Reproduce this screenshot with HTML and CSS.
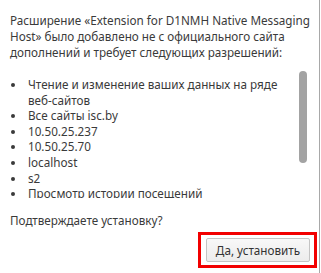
FILE: index.html
```html
<!DOCTYPE html>
<html lang="ru">
<head>
<meta charset="utf-8">
<link rel="stylesheet" href="styles.css">
</head>
<body>
<div class="dialog">
  <p class="intro">Расширение «Extension for D1NMH Native Messaging<br>Host» было добавлено не с официального сайта<br>дополнений и требует следующих разрешений:</p>
  <div class="scroll">
    <ul class="perms">
      <li>Чтение и изменение ваших данных на ряде<br>веб-сайтов</li>
      <li>Все сайты isc.by</li>
      <li>10.50.25.237</li>
      <li>10.50.25.70</li>
      <li>localhost</li>
      <li>s2</li>
      <li>Просмотр истории посещений</li>
    </ul>
    <div class="track"><div class="thumb"></div></div>
  </div>
  <p class="confirm">Подтверждаете установку?</p>
  <div class="footer">
    <div class="highlight"><button class="btn">Да, установить</button></div>
  </div>
</div>
</body>
</html>
```
FILE: styles.css
```css
html, body {
  margin: 0;
  padding: 0;
  background: #fff;
  overflow: hidden;
}
.dialog {
  width: 320px;
  height: 273px;
  box-sizing: border-box;
  border-right: 1px solid #a8a8a8;
  padding-top: 12px;
  font-family: "Segoe UI", "Noto Sans", sans-serif;
  font-size: 11.7px;
  color: #3a3a3a;
}
.intro {
  margin: 0;
  padding-left: 10px;
  line-height: 16px;
  white-space: nowrap;
}
.scroll {
  display: flex;
  margin-top: 11px;
  height: 127px;
}
.perms {
  flex: 1;
  margin: 0;
  padding: 6px 0 0 11px;
  list-style: none;
  overflow: hidden;
  line-height: 15.6px;
}
.perms li {
  display: flex;
  align-items: flex-start;
  gap: 13px;
  white-space: nowrap;
}
.perms li::before {
  content: "";
  flex: none;
  width: 4px;
  height: 4px;
  border-radius: 50%;
  background: #3a3a3a;
  margin-top: 6px;
}
.track {
  width: 8px;
  margin-right: 12px;
}
.thumb {
  height: 92px;
  border-radius: 4px;
  background: #a3a3a3;
}
.confirm {
  margin: 14px 0 0;
  padding-left: 10px;
  line-height: 16px;
}
.footer {
  display: flex;
  justify-content: flex-end;
  margin-top: 4px;
  padding-right: 2px;
}
.highlight {
  border: 3px solid #f20000;
  padding: 3px 4px 3px 5px;
}
.btn {
  display: block;
  width: 104px;
  height: 24px;
  box-sizing: border-box;
  border: 1px solid #c4c4c4;
  border-radius: 2px;
  background: linear-gradient(#f8f8f8, #ececec);
  font-family: "Segoe UI", "Noto Sans", sans-serif;
  font-size: 11.7px;
  color: #333;
  padding: 0;
}
```
